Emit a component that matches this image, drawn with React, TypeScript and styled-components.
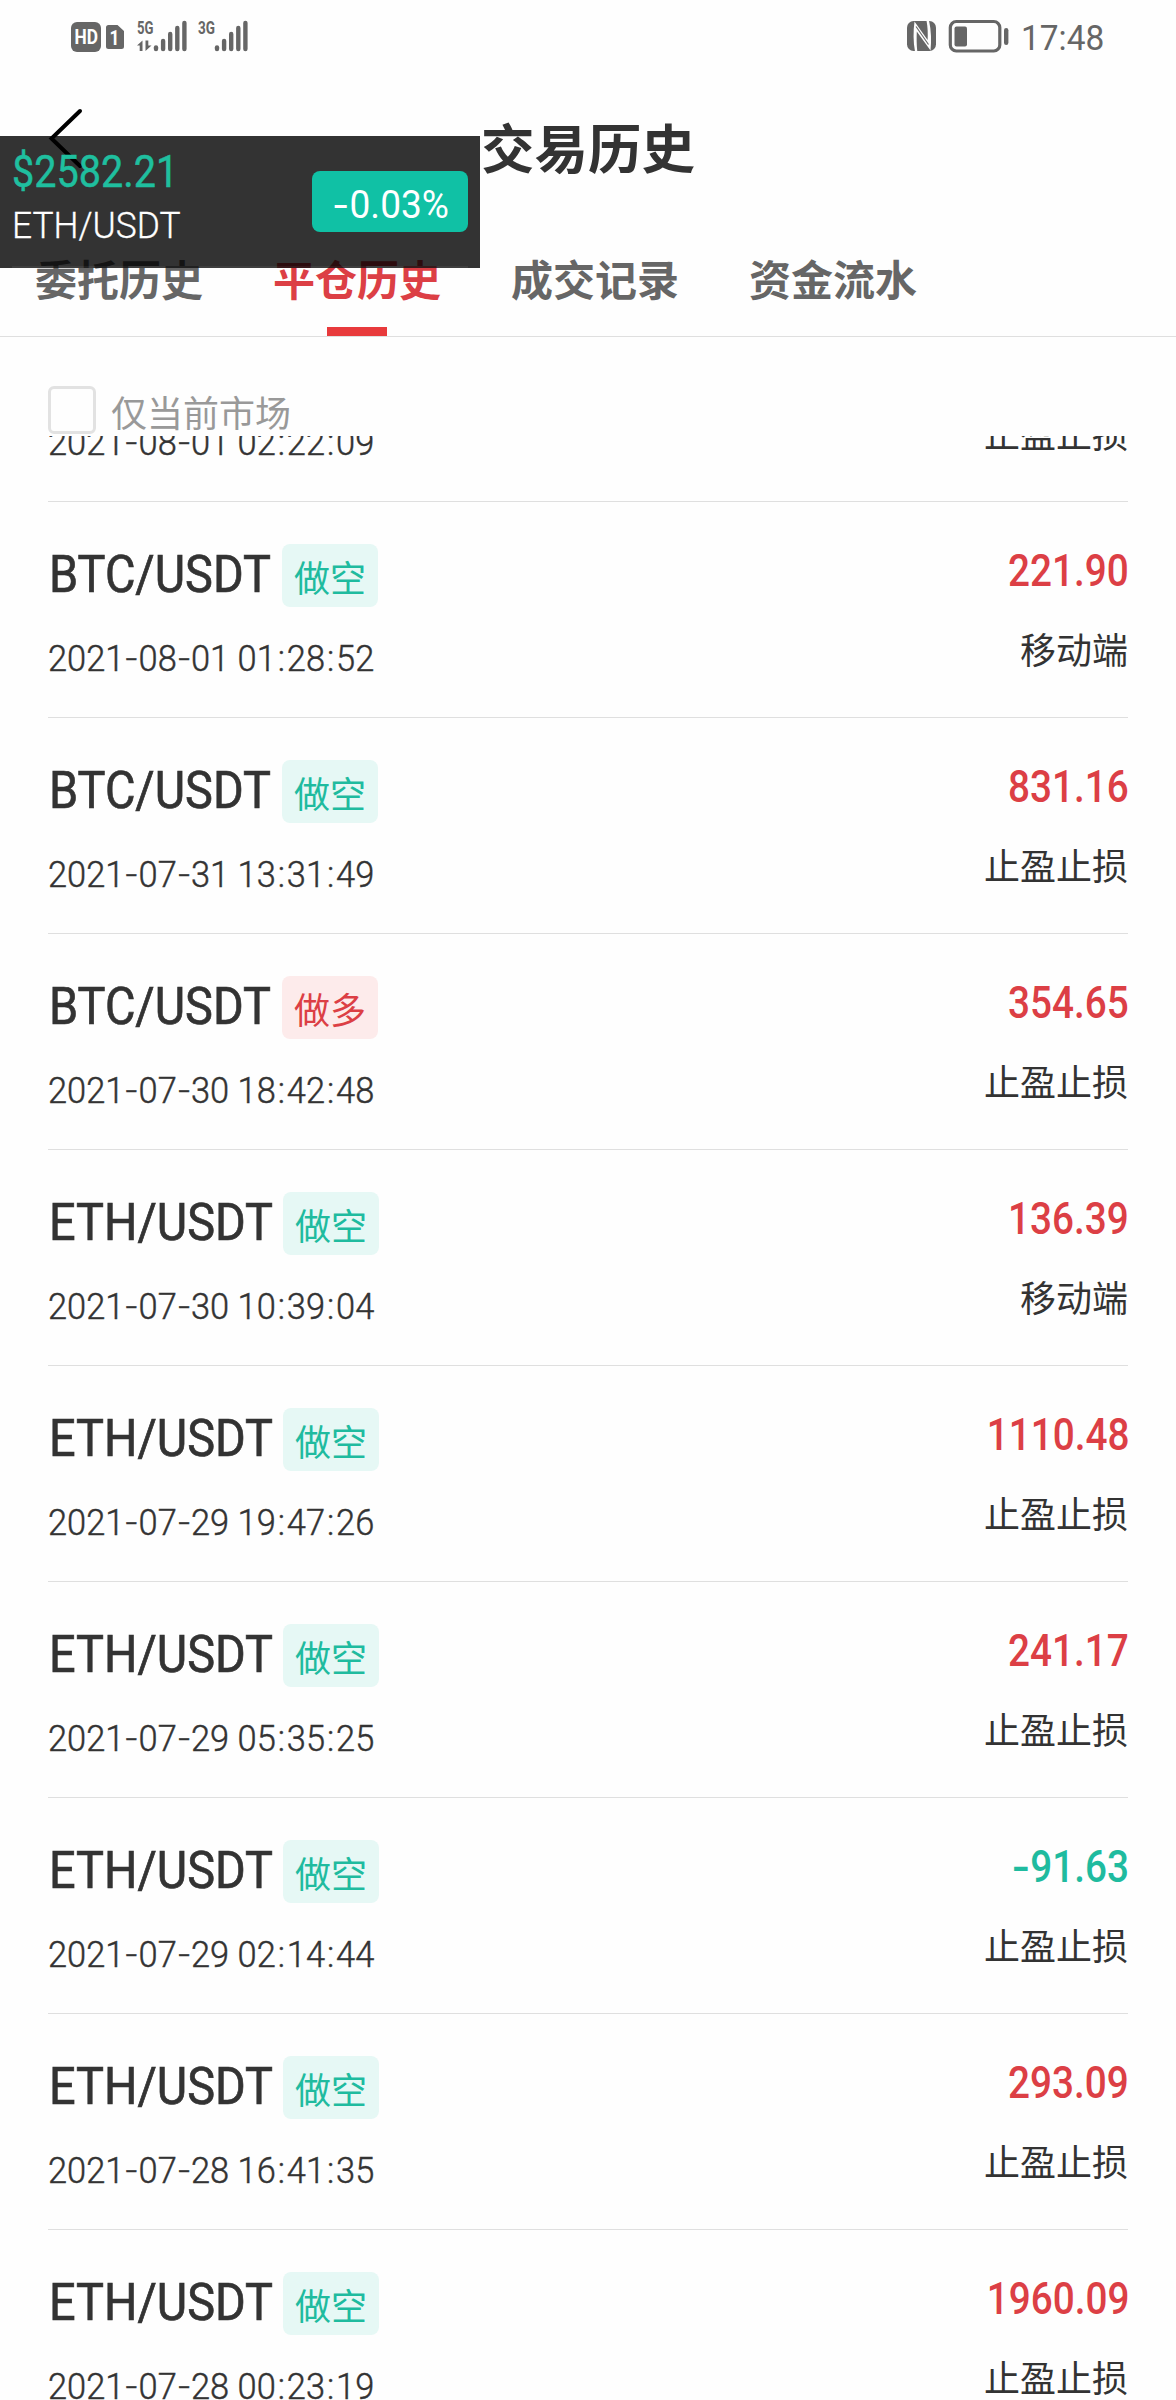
import React from "react";
import styled, { createGlobalStyle } from "styled-components";

const RED = "#e83a3c";
const RED_TEXT = "#dc3f45";
const GREEN = "#1fbb9f";
const INK = "#333333";
const LATIN = `Roboto, "Noto Sans CJK SC", sans-serif`;
const CJK = `"Noto Sans CJK SC", sans-serif`;

const GlobalStyle = createGlobalStyle`
  * { box-sizing: border-box; }
  html, body { margin: 0; padding: 0; background: #fefefe; }
`;

const Screen = styled.div`
  position: relative;
  display: flex;
  flex-direction: column;
  width: 1176px;
  height: 2400px;
  overflow: hidden;
  background: #fefefe;
  color: ${INK};
  font-family: ${CJK};
`;

/* Narrowed latin text: the box keeps a known width, the glyphs are squeezed from one edge. */
const Latin = styled.span<{
  $size: number;
  $line: number;
  $squeeze: number;
  $weight?: number;
  $embolden?: number;
  $from?: "left" | "right";
  $color?: string;
}>`
  display: block;
  white-space: pre;
  font-family: ${LATIN};
  font-size: ${(p) => p.$size}px;
  line-height: ${(p) => p.$line}px;
  font-weight: ${(p) => p.$weight ?? 400};
  color: ${(p) => p.$color ?? "inherit"};
  -webkit-text-stroke: ${(p) => p.$embolden ?? 0}px currentColor;
  transform: scaleX(${(p) => p.$squeeze});
  transform-origin: ${(p) => p.$from ?? "left"} center;
`;

const StatusBar = styled.div`
  flex: none;
  display: flex;
  justify-content: space-between;
  height: 74px;
  padding: 0 73px 0 70px;
  color: #666;
`;

const StatusRight = styled.div`
  display: flex;
  gap: 12px;
`;

const Clock = styled.div`
  width: 82px;
  padding-top: 16px;
`;

const Header = styled.header`
  flex: none;
  display: grid;
  grid-template-columns: 140px 1fr 140px;
  height: 142px;
`;

const BackButton = styled.button`
  display: flex;
  align-items: flex-start;
  border: 0;
  padding: 34px 0 0 47px;
  background: none;
`;

const Title = styled.h1`
  margin: 0;
  text-align: center;
  font-size: 53.5px;
  line-height: 144px;
  font-weight: 700;
`;

const Tabs = styled.nav`
  flex: none;
  display: flex;
  gap: 70px;
  height: 121px;
  padding-left: 35px;
  border-bottom: 1px solid #dfdfdf;
`;

const Tab = styled.div<{ $active?: boolean }>`
  display: flex;
  flex-direction: column;
  align-items: center;
  justify-content: space-between;
  width: 168px;
  font-size: 42px;
  line-height: 124px;
  height: 120px;
  font-weight: 700;
  color: ${(p) => (p.$active ? RED_TEXT : "#666")};
  white-space: nowrap;
  &::after {
    content: "";
    flex: none;
    width: 60px;
    height: 9px;
    margin-top: -13px;
    background: ${(p) => (p.$active ? RED : "transparent")};
  }
`;

const Filter = styled.label`
  flex: none;
  display: flex;
  gap: 15px;
  height: 99px;
  padding: 49px 48px 0;
  color: #999;
  font-size: 36px;
  line-height: 51px;
`;

const CheckBox = styled.span`
  width: 48px;
  height: 48px;
  border: 3px solid #e2e2e2;
  border-radius: 6px;
`;

const Viewport = styled.main`
  flex: 1;
  min-height: 0;
  overflow: hidden;
  padding: 0 48px;
`;

const List = styled.div`
  display: flex;
  flex-direction: column;
  margin-top: -150px;
`;

const Row = styled.article`
  flex: none;
  display: flex;
  justify-content: space-between;
  height: 216px;
  border-bottom: 1px solid #dfdfdf;
`;

const Left = styled.div`
  display: flex;
  flex-direction: column;
  gap: 31px;
  padding-top: 42px;
`;

const PairLine = styled.div`
  display: flex;
  height: 63px;
`;

const PairBox = styled.div<{ $width: number }>`
  width: ${(p) => p.$width}px;
  padding-left: 1px;
`;

const Badge = styled.span<{ $long: boolean }>`
  height: 63px;
  padding: 0 12px;
  border-radius: 8px;
  font-size: 36px;
  line-height: 65px;
  color: ${(p) => (p.$long ? RED_TEXT : GREEN)};
  background: ${(p) => (p.$long ? "#fdebeb" : "#e6f8f5")};
`;

const Dash = styled.span<{ $width: number; $stretch: number }>`
  display: inline-block;
  width: ${(p) => p.$width}px;
  text-align: center;
  transform: scaleX(${(p) => p.$stretch});
`;

const Colon = styled.span`
  display: inline-block;
  width: 11.8px;
  text-align: center;
`;

const Right = styled.div`
  display: flex;
  flex-direction: column;
  align-items: flex-end;
  gap: 26px;
  padding-top: 45px;
`;

const AmountLine = styled.div`
  height: 50px;
  margin-right: -1px;
`;

const Source = styled.div`
  font-size: 36px;
  line-height: 50px;
`;

const Ticker = styled.aside`
  position: absolute;
  left: 0;
  top: 136px;
  display: flex;
  justify-content: space-between;
  width: 480px;
  height: 132px;
  padding: 0 12px 0 12px;
  background: rgba(0, 0, 0, 0.8);
  &::after {
    content: "";
    position: absolute;
    left: 12px;
    right: 12px;
    bottom: 0;
    height: 2px;
    background: rgba(255, 255, 255, 0.06);
  }
`;

const Quote = styled.div`
  display: flex;
  flex-direction: column;
  width: 180px;
  padding-top: 11px;
`;

const Change = styled.div`
  width: 156px;
  height: 61px;
  margin-top: 35px;
  padding-left: 20px;
  border-radius: 8px;
  background: #10c1a5;
`;

function Stamp({ value }: { value: string }) {
  return (
    <Latin $size={36.5} $line={41} $squeeze={0.942} $weight={300} $embolden={0.45}>
      {value.split(/([-: ])/).map((part, i) => {
        if (part === "-") return <Dash key={i} $width={15.2} $stretch={1.2}>-</Dash>;
        if (part === ":") return <Colon key={i}>:</Colon>;
        return <React.Fragment key={i}>{part}</React.Fragment>;
      })}
    </Latin>
  );
}

function Amount({ value }: { value: string }) {
  const negative = value.startsWith("-");
  return (
    <Latin $size={43.5} $line={50} $squeeze={0.89} $weight={500} $from="right" $color={negative ? GREEN : RED_TEXT}>
      {negative && <Dash $width={21} $stretch={1.35}>-</Dash>}
      {negative ? value.slice(1) : value}
    </Latin>
  );
}

type Trade = { pair?: string; side?: "做空" | "做多"; time: string; amount?: string; source: string };

const trades: Trade[] = [
  { time: "2021-08-01 02:22:09", source: "止盈止损" },
  { pair: "BTC/USDT", side: "做空", time: "2021-08-01 01:28:52", amount: "221.90", source: "移动端" },
  { pair: "BTC/USDT", side: "做空", time: "2021-07-31 13:31:49", amount: "831.16", source: "止盈止损" },
  { pair: "BTC/USDT", side: "做多", time: "2021-07-30 18:42:48", amount: "354.65", source: "止盈止损" },
  { pair: "ETH/USDT", side: "做空", time: "2021-07-30 10:39:04", amount: "136.39", source: "移动端" },
  { pair: "ETH/USDT", side: "做空", time: "2021-07-29 19:47:26", amount: "1110.48", source: "止盈止损" },
  { pair: "ETH/USDT", side: "做空", time: "2021-07-29 05:35:25", amount: "241.17", source: "止盈止损" },
  { pair: "ETH/USDT", side: "做空", time: "2021-07-29 02:14:44", amount: "-91.63", source: "止盈止损" },
  { pair: "ETH/USDT", side: "做空", time: "2021-07-28 16:41:35", amount: "293.09", source: "止盈止损" },
  { pair: "ETH/USDT", side: "做空", time: "2021-07-28 00:23:19", amount: "1960.09", source: "止盈止损" },
];

const tabs = ["委托历史", "平仓历史", "成交记录", "资金流水"];

function SignalBars({ x }: { x: number }) {
  return (
    <g stroke="#666" strokeWidth="4.4" strokeLinecap="round">
      {[47.5, 41, 34, 28, 23].map((top, i) => (
        <line key={i} x1={x + i * 7.1} x2={x + i * 7.1} y1={top} y2="49" />
      ))}
    </g>
  );
}

function NetworkIcons() {
  return (
    <svg width="190" height="74" viewBox="70 0 190 74" fontFamily="Roboto, sans-serif" fontWeight="700">
      <rect x="71" y="22" width="30" height="30" rx="6" fill="#666" />
      <text x="74.5" y="44" fontSize="19.5" fill="#fff" textLength="23.5" lengthAdjust="spacingAndGlyphs">HD</text>
      <path d="M108.5 25h9l6.500 6v15.500a2.500 2.500 0 0 1-2.500 2.500h-13a2.500 2.500 0 0 1-2.500-2.500v-19a2.500 2.500 0 0 1 2.500-2.500z" fill="#666" />
      <text x="109.5" y="45" fontSize="21" fill="#fff" textLength="10" lengthAdjust="spacingAndGlyphs">1</text>
      <text x="137" y="34" fontSize="18.5" fill="#666" textLength="16.5" lengthAdjust="spacingAndGlyphs">5G</text>
      <path d="M142.5 40.5V51h-2.800v-5.500H137zM145.500 40.500v10.500l6-5.500h-3.200v-5z" fill="#666" />
      <SignalBars x={156} />
      <text x="198" y="34" fontSize="18.5" fill="#666" textLength="17" lengthAdjust="spacingAndGlyphs">3G</text>
      <SignalBars x={217} />
    </svg>
  );
}

function DeviceIcons() {
  return (
    <svg width="104" height="74" viewBox="905 0 104 74" fill="none">
      <rect x="907" y="21" width="29" height="30" rx="6.5" fill="#666" />
      <path
        d="M914.5 21.5C913.2 31 913.2 42 915 51.500L917.300 51.500C916.600 45 916.500 38 916.800 31.500L930.500 50.500C931.500 41 931.300 31 929 20.500L926.500 20.500C927.800 28 928 34 927.600 40Z"
        fill="#fefefe"
      />
      <path d="M916 26.500L928.500 44.500" stroke="#666" strokeWidth="1.1" />
      <rect x="950.3" y="21.5" width="49.5" height="29.5" rx="6" stroke="#666" strokeWidth="3.2" />
      <rect x="954.5" y="26.5" width="12.5" height="20" rx="2" fill="#666" />
      <rect x="1004" y="28" width="4.4" height="17" rx="2.2" fill="#666" />
    </svg>
  );
}

export default function App() {
  return (
    <Screen>
      <GlobalStyle />
      <StatusBar>
        <NetworkIcons />
        <StatusRight>
          <DeviceIcons />
          <Clock>
            <Latin $size={34.5} $line={44} $squeeze={0.97}>17:48</Latin>
          </Clock>
        </StatusRight>
      </StatusBar>
      <Header>
        <BackButton aria-label="返回">
          <svg width="38" height="62" viewBox="47 108 38 62" fill="none" stroke="#000" strokeWidth="4" strokeLinecap="round">
            <path d="M80 111L51.500 138.500L80 166" />
          </svg>
        </BackButton>
        <Title>交易历史</Title>
      </Header>
      <Tabs>
        {tabs.map((name, i) => (
          <Tab key={name} $active={i === 1}>{name}</Tab>
        ))}
      </Tabs>
      <Filter>
        <CheckBox />
        仅当前市场
      </Filter>
      <Viewport>
        <List>
          {trades.map((t) => (
            <Row key={t.time}>
              <Left>
                <PairLine>
                  {t.pair && (
                    <PairBox $width={t.pair.startsWith("BTC") ? 234 : 235}>
                      <Latin $size={51.6} $line={62} $squeeze={0.908} $embolden={0.7}>{t.pair}</Latin>
                    </PairBox>
                  )}
                  {t.side && <Badge $long={t.side === "做多"}>{t.side}</Badge>}
                </PairLine>
                <Stamp value={t.time} />
              </Left>
              <Right>
                <AmountLine>{t.amount && <Amount value={t.amount} />}</AmountLine>
                <Source>{t.source}</Source>
              </Right>
            </Row>
          ))}
        </List>
      </Viewport>
      <Ticker>
        <Quote>
          <Latin $size={43.5} $line={52} $squeeze={0.91} $embolden={0.5} $color="#1fbf9f">$2582.21</Latin>
          <Latin $size={36.5} $line={54} $squeeze={0.968} $weight={300} $embolden={0.3} $color="#fff">ETH/USDT</Latin>
        </Quote>
        <Change>
          <Latin $size={38} $line={69} $squeeze={0.975} $color="#fff">
            <Dash $width={18} $stretch={1.35}>-</Dash>0.03%
          </Latin>
        </Change>
      </Ticker>
    </Screen>
  );
}
